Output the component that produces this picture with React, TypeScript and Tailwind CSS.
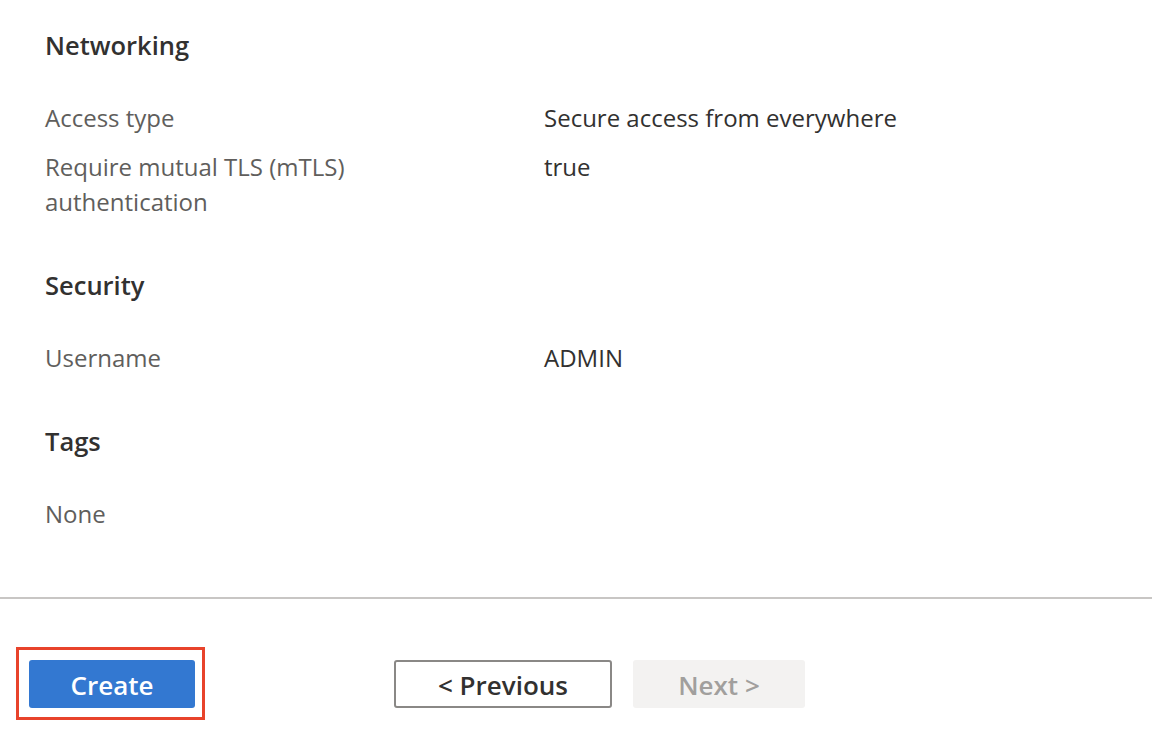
import React from 'react'

type Row = { label: string[]; value: string }
type Section = { title: string; rows: Row[] }

const SECTIONS: Section[] = [
  {
    title: 'Networking',
    rows: [
      { label: ['Access type'], value: 'Secure access from everywhere' },
      { label: ['Require mutual TLS (mTLS)', 'authentication'], value: 'true' },
    ],
  },
  { title: 'Security', rows: [{ label: ['Username'], value: 'ADMIN' }] },
  { title: 'Tags', rows: [{ label: ['None'], value: '' }] },
]

const App: React.FC = () => {
  return (
    <div className="w-[1152px] h-[744px] bg-white overflow-hidden font-['Open_Sans',sans-serif] text-[#323130]">
      {/* Summary */}
      <div className="h-[597px] pl-[45px] pt-[28px]">
        {SECTIONS.map((s, i) => (
          <div key={s.title} className={i > 0 ? 'mt-[49px]' : ''}>
            <h2 className="text-[25.5px] leading-[35px] font-semibold">{s.title}</h2>
            <div className="mt-[37px] flex flex-col gap-[14px]">
              {s.rows.map((r) => (
                <div key={r.label[0]} className="flex text-[24px] leading-[35px]">
                  <div className="w-[499px] text-[#605e5c]">
                    {r.label.map((l) => (
                      <div key={l}>{l}</div>
                    ))}
                  </div>
                  <div>{r.value}</div>
                </div>
              ))}
            </div>
          </div>
        ))}
      </div>

      {/* Footer */}
      <div className="border-t-2 border-[#c8c6c4] h-[147px] flex items-start pt-[48px] pl-[16px]">
        <div className="border-[3px] border-[#e8432b] p-[10px] w-[189px] h-[73px]">
          <button className="w-[166px] h-[48px] rounded-[3px] bg-[#3378d1] text-white text-[26px] font-semibold leading-none pt-[2px]">
            Create
          </button>
        </div>
        <div className="flex gap-[21px] ml-[189px] mt-[13px]">
          <button className="w-[218px] h-[48px] rounded-[3px] border-2 border-[#8a8886] bg-white text-[26px] font-semibold leading-none text-[#323130] pt-[2px]">
            &lt; Previous
          </button>
          <button className="w-[172px] h-[48px] rounded-[3px] bg-[#f3f2f1] text-[26px] font-semibold leading-none text-[#a19f9d] pt-[2px]">
            Next &gt;
          </button>
        </div>
      </div>
    </div>
  )
}

export default App
